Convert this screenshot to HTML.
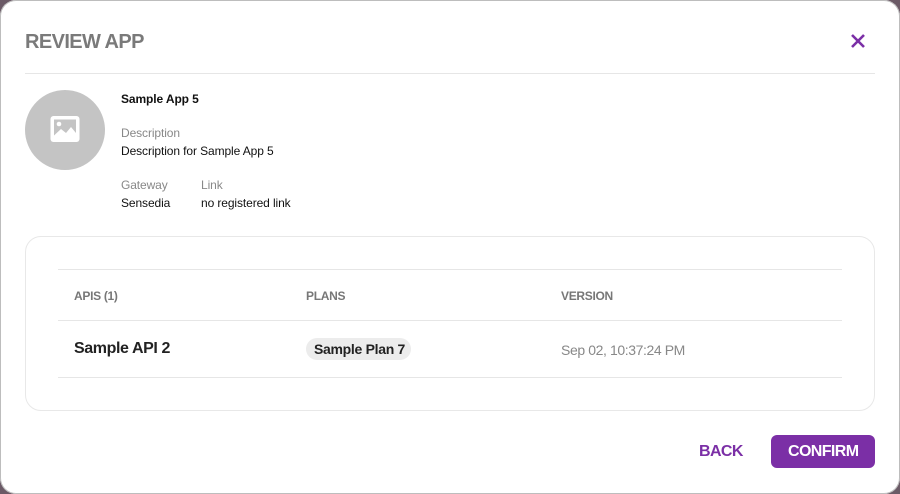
<!DOCTYPE html>
<html><head><style>
*{box-sizing:border-box;margin:0;padding:0}
body{width:900px;height:494px;background:#6b5a66;font-family:"Liberation Sans",Arial,sans-serif;overflow:hidden;position:relative}
.dlg{position:absolute;left:0;top:0;width:900px;height:494px;background:#fff;box-shadow:inset 0 0 0 1px #bdbdbd;border-radius:16px}
.title{position:absolute;left:25px;top:31px;font-size:20px;font-weight:bold;color:#7a7a7a;letter-spacing:-0.6px}
.close{position:absolute;left:850px;top:33px}
.hr{position:absolute;left:25px;width:850px;height:1px;background:#e6e6e6}
.avatar{position:absolute;left:25px;top:90px;width:80px;height:80px;border-radius:50%;background:#c4c4c4}
.t{position:absolute;font-size:12px;color:#111;white-space:nowrap;letter-spacing:-0.1px}
.l{position:absolute;font-size:12px;color:#888;letter-spacing:-0.1px}
.card{position:absolute;left:25px;top:236px;width:850px;height:175px;border:1px solid #e8e8e8;border-radius:16px}
.th{position:absolute;font-size:12px;color:#777;font-weight:bold;letter-spacing:-0.3px}
.chip{position:absolute;left:306px;top:338px;width:105px;height:22px;border-radius:11px;background:#ececec;font-size:14px;font-weight:bold;color:#222;padding:3px 0 0 8px;white-space:nowrap;letter-spacing:-0.3px}
.btn{position:absolute;font-size:16px;font-weight:bold;letter-spacing:-0.6px;white-space:nowrap}
</style></head><body>
<div class="dlg">
<div class="title">REVIEW APP</div>
<svg class="close" width="16" height="16" viewBox="0 0 16 16"><path d="M2 2L14 14M14 2L2 14" stroke="#7b2fa6" stroke-width="2.6"/></svg>
<div class="hr" style="top:73px"></div>
<div class="avatar"><svg style="position:absolute;left:24px;top:24px" width="32" height="30" viewBox="0 0 32 30"><rect x="1.5" y="2" width="29" height="26" rx="3" fill="#fff"/><rect x="5" y="5.5" width="22" height="16" fill="#c4c4c4"/><circle cx="10" cy="10" r="2.3" fill="#fff"/><path d="M5 21.5L12 15L17 19L22 13L27 19V21.5Z" fill="#fff"/></svg></div>
<div class="t" style="left:121px;top:92px;font-weight:bold">Sample App 5</div>
<div class="l" style="left:121px;top:126px">Description</div>
<div class="t" style="left:121px;top:144px">Description for Sample App 5</div>
<div class="l" style="left:121px;top:178px">Gateway</div>
<div class="t" style="left:121px;top:196px">Sensedia</div>
<div class="l" style="left:201px;top:178px">Link</div>
<div class="t" style="left:201px;top:196px">no registered link</div>
<div class="card"></div>
<div class="hr" style="left:58px;width:784px;top:269px"></div>
<div class="th" style="left:74px;top:289px">APIS (1)</div>
<div class="th" style="left:306px;top:289px">PLANS</div>
<div class="th" style="left:561px;top:289px">VERSION</div>
<div class="hr" style="left:58px;width:784px;top:320px"></div>
<div class="t" style="left:74px;top:340px;font-size:16px;font-weight:bold;color:#222;letter-spacing:-0.4px">Sample API 2</div>
<div class="chip">Sample Plan 7</div>
<div class="t" style="left:561px;top:342px;font-size:14px;color:#888;letter-spacing:-0.4px">Sep 02, 10:37:24 PM</div>
<div class="hr" style="left:58px;width:784px;top:377px"></div>
<div class="btn" style="left:699px;top:443px;color:#7b2fa6">BACK</div>
<div style="position:absolute;left:771px;top:435px;width:104px;height:33px;border-radius:6px;background:#7b2fa6"></div>
<div class="btn" style="left:788px;top:443px;color:#fff">CONFIRM</div>
</div>
</body></html>
